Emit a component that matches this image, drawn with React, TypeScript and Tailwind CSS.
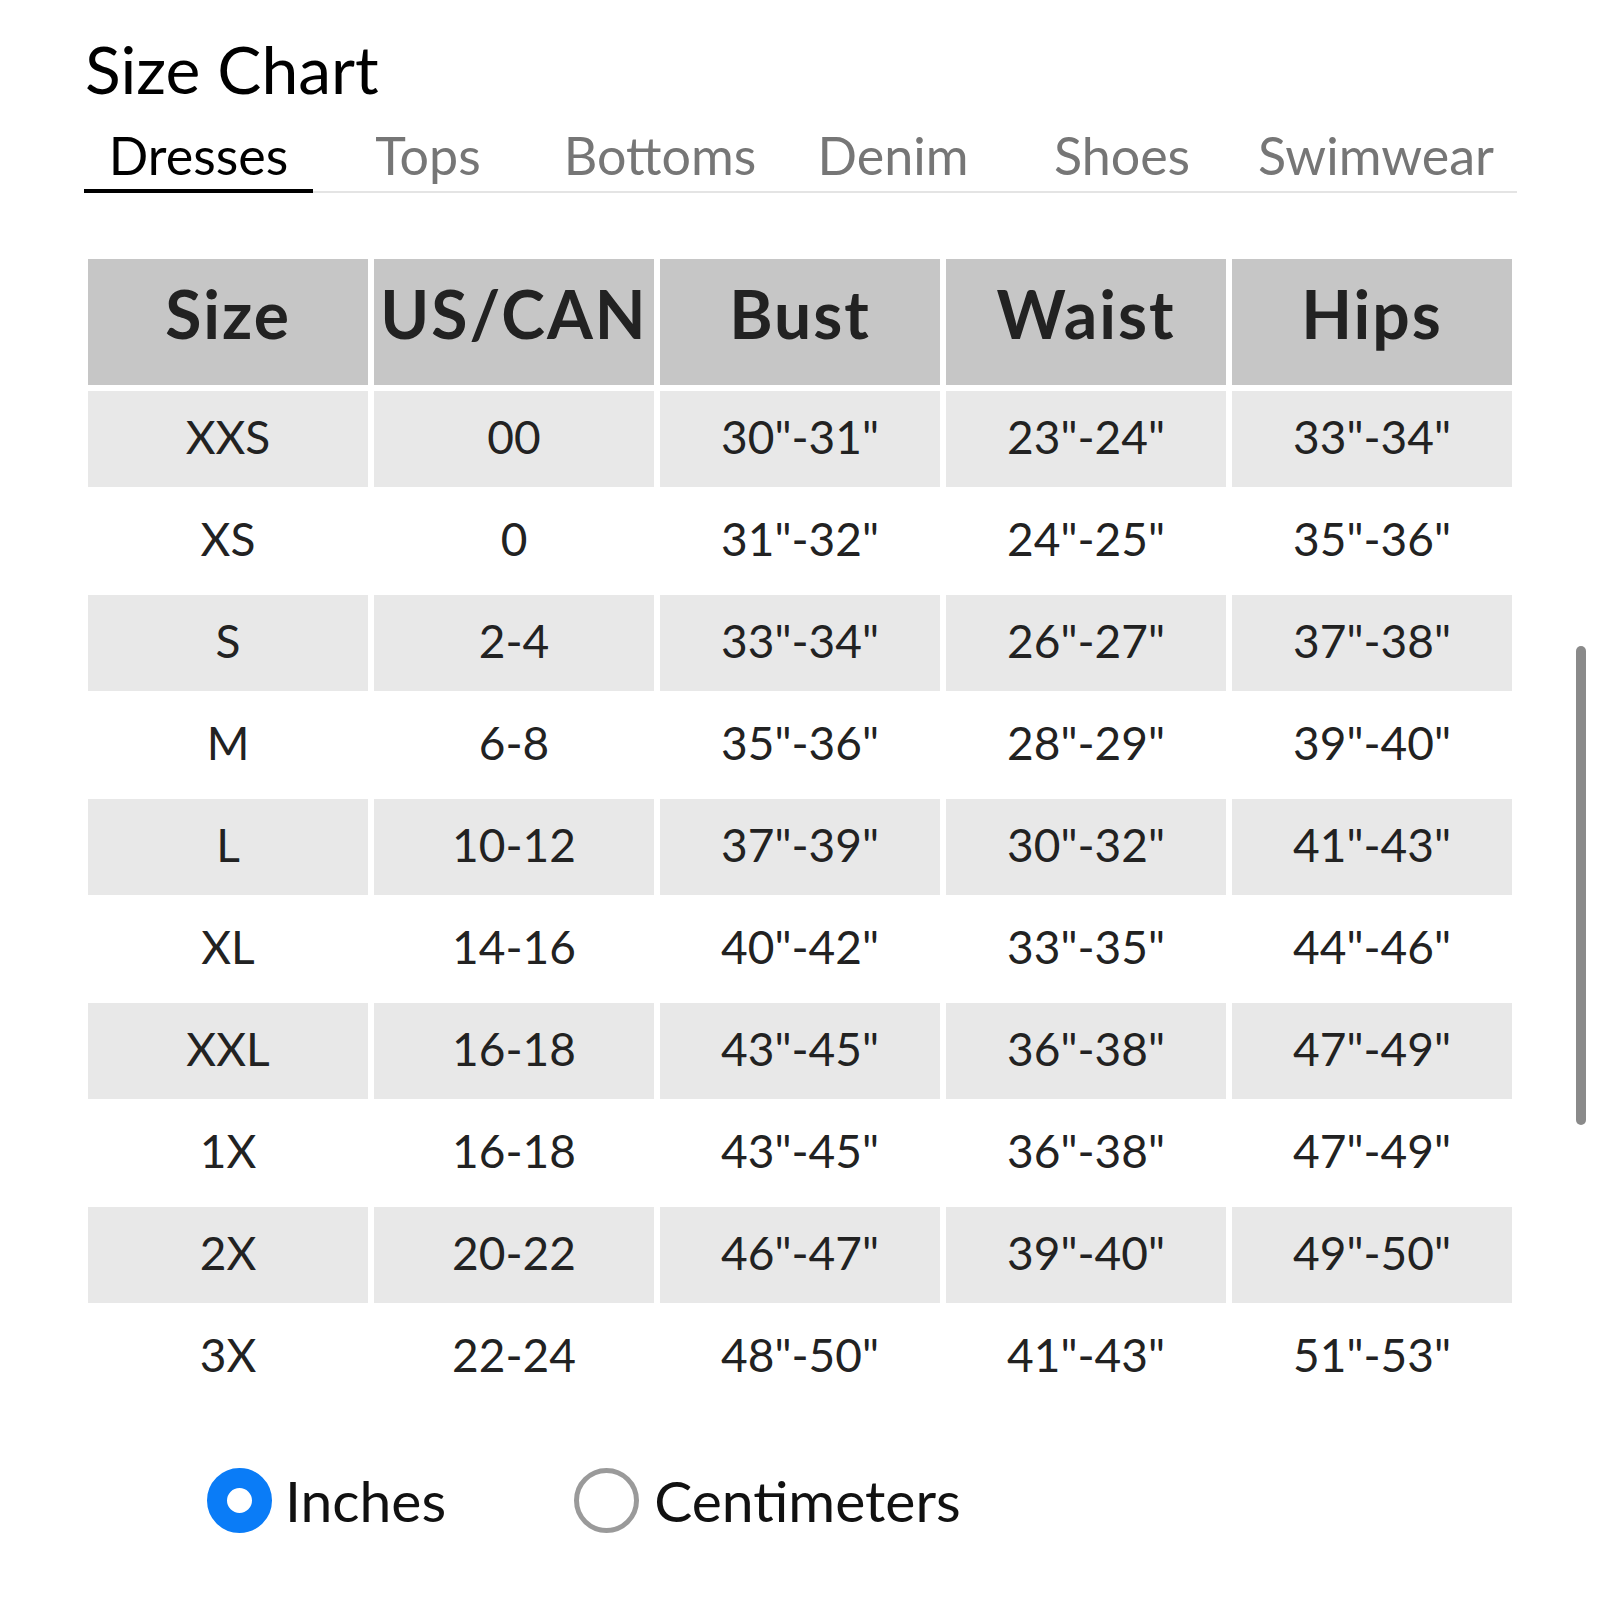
import React from "react";

const tabs = [
  { label: "Dresses", w: "w-[229px]", active: true },
  { label: "Tops", w: "w-[230px]", active: false },
  { label: "Bottoms", w: "w-[234px]", active: false },
  { label: "Denim", w: "w-[232px]", active: false },
  { label: "Shoes", w: "w-[226px]", active: false },
  { label: "Swimwear", w: "flex-1", active: false },
];

const headers = ["Size", "US/CAN", "Bust", "Waist", "Hips"];

const rows: string[][] = [
  ["XXS", "00", '30"-31"', '23"-24"', '33"-34"'],
  ["XS", "0", '31"-32"', '24"-25"', '35"-36"'],
  ["S", "2-4", '33"-34"', '26"-27"', '37"-38"'],
  ["M", "6-8", '35"-36"', '28"-29"', '39"-40"'],
  ["L", "10-12", '37"-39"', '30"-32"', '41"-43"'],
  ["XL", "14-16", '40"-42"', '33"-35"', '44"-46"'],
  ["XXL", "16-18", '43"-45"', '36"-38"', '47"-49"'],
  ["1X", "16-18", '43"-45"', '36"-38"', '47"-49"'],
  ["2X", "20-22", '46"-47"', '39"-40"', '49"-50"'],
  ["3X", "22-24", '48"-50"', '41"-43"', '51"-53"'],
];

export default function App() {
  return (
    <div
      className="relative w-[1600px] h-[1600px] bg-white text-[#222]"
      style={{ fontFamily: "Lato, 'Open Sans', sans-serif" }}
    >
      <div className="pl-[84px] pt-[36px] w-[1517px]">
        <h1 className="text-[66px] leading-[66px] font-normal text-black pl-[1px]">Size Chart</h1>

        <div className="mt-[26px] flex border-b-2 border-[#e4e4e4]">
          {tabs.map((t) => (
            <div
              key={t.label}
              className={
                t.active
                  ? `${t.w} -mb-[2px] border-b-4 border-black pb-[7px] text-center text-[52px] leading-[54px] text-black`
                  : `${t.w} pb-[9px] text-center text-[52px] leading-[54px] text-[#767676]`
              }
            >
              {t.label}
            </div>
          ))}
        </div>

        <div className="mt-[66px] ml-[4px] w-[1424px] flex flex-col gap-[6px]">
          <div className="grid grid-cols-5 gap-[6px]">
            {headers.map((h) => (
              <div
                key={h}
                className="h-[126px] bg-[#c6c6c6] flex items-center justify-center text-[66px] font-bold tracking-[0.03em] text-[#222] pb-[18px]"
              >
                {h}
              </div>
            ))}
          </div>
          {rows.map((r, i) => (
            <div key={i} className="grid grid-cols-5 gap-[6px]">
              {r.map((c, j) => (
                <div
                  key={j}
                  className={`h-[96px] flex items-center justify-center text-[46px] text-[#222] pb-[5px] ${
                    i % 2 === 0 ? "bg-[#e8e8e8]" : "bg-white"
                  }`}
                >
                  {c}
                </div>
              ))}
            </div>
          ))}
        </div>

        <div className="mt-[63px] ml-[123px] flex items-center h-[65px]">
          <div className="w-[65px] h-[65px] rounded-full border-[20px] border-[#0a7cf7] bg-white shrink-0" />
          <span className="ml-[13px] text-[57px] leading-[57px] text-[#111]">Inches</span>
          <div className="ml-[128px] w-[65px] h-[65px] rounded-full border-[5px] border-[#9a9a9a] bg-white shrink-0" />
          <span className="ml-[15px] text-[57px] leading-[57px] text-[#111]">Centimeters</span>
        </div>
      </div>

      <div className="absolute left-[1576px] top-[646px] w-[10px] h-[479px] rounded-full bg-[#8a8a8a]" />
    </div>
  );
}
